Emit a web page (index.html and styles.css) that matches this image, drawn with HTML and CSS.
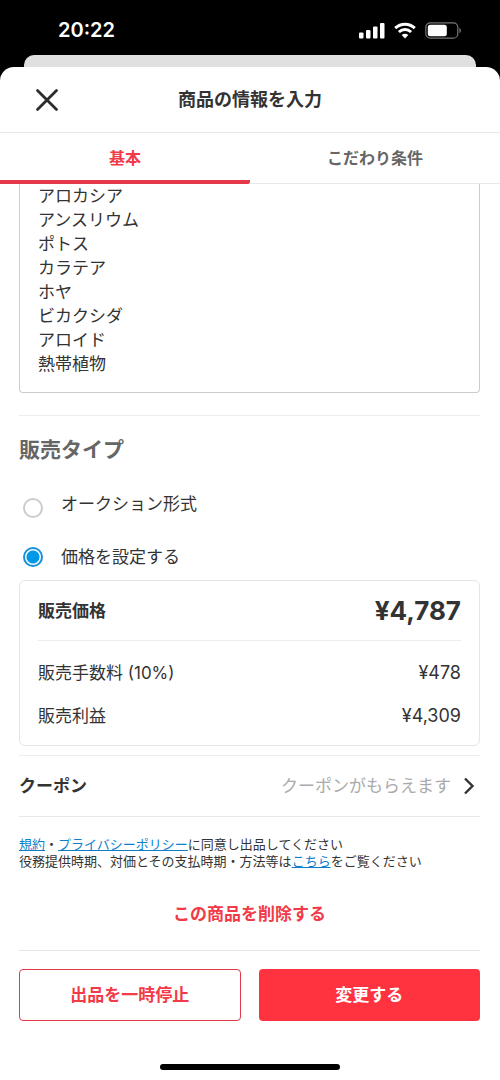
FILE: index.html
```html
<!DOCTYPE html>
<html lang="ja">
<head>
<meta charset="utf-8">
<meta name="viewport" content="width=device-width, initial-scale=1">
<title>商品の情報を入力</title>
<link rel="stylesheet" href="styles.css">
</head>
<body>
<div class="status">
  <span class="clock">20:22</span>
  <span class="status-icons">
    <svg width="26" height="17" viewBox="0 0 26 17" fill="#fff"><rect x="0" y="10.500" width="4.500" height="6" rx="1"/><rect x="7" y="8" width="4.500" height="8.500" rx="1"/><rect x="14" y="4.500" width="4.500" height="12" rx="1"/><rect x="21" y="1" width="4.500" height="15.500" rx="1"/></svg>
    <svg width="22" height="17" viewBox="0 0 22 17" fill="none" stroke="#fff" stroke-width="3"><path d="M1.200 6.200C6.800 .9 15.200 .9 20.800 6.200"/><path d="M4.900 10C8.500 6.700 13.500 6.700 17.100 10"/><path d="M11 16.500L7.700 13.100C9.600 11.400 12.400 11.400 14.300 13.100Z" fill="#fff" stroke="none"/></svg>
    <svg width="37" height="17" viewBox="0 0 37 17"><rect x=".8" y=".8" width="32" height="15.400" rx="4.500" fill="none" stroke="#777" stroke-width="1.200"/><rect x="2.800" y="2.800" width="19" height="11.400" rx="2.500" fill="#fff"/><path d="M34.400 6v5c2-.6 2-4.400 0-5Z" fill="#777"/></svg>
  </span>
</div>
<div class="back-sheet"></div>
<main class="sheet">
  <header class="header">
    <button class="close" type="button" aria-label="閉じる"><svg width="24" height="24" viewBox="0 0 24 24" fill="none" stroke="#2c2c2c" stroke-width="2.800" stroke-linecap="round"><path d="M2.500 2.500l19 19M21.500 2.500l-19 19"/></svg></button>
    <h1 class="title">商品の情報を入力</h1>
  </header>
  <nav class="tabs">
    <button class="tab tab-active" type="button">基本</button>
    <button class="tab" type="button">こだわり条件</button>
  </nav>
  <form class="form">
    <textarea class="description" rows="8" aria-label="商品の説明">アロカシア
アンスリウム
ポトス
カラテア
ホヤ
ビカクシダ
アロイド
熱帯植物</textarea>
    <section class="sale">
      <h2 class="section-title">販売タイプ</h2>
      <label class="option option-first"><input class="radio" type="radio" name="type"><span class="option-text">オークション形式</span></label>
      <label class="option"><input class="radio" type="radio" name="type" checked><span class="option-text">価格を設定する</span></label>
      <dl class="card">
        <div class="row row-price"><dt>販売価格</dt><dd class="price">¥4,787</dd></div>
        <div class="row"><dt>販売手数料 (10%)</dt><dd class="amount">¥478</dd></div>
        <div class="row"><dt>販売利益</dt><dd class="amount">¥4,309</dd></div>
      </dl>
    </section>
    <button class="coupon" type="button">
      <span class="coupon-name">クーポン</span>
      <span class="coupon-hint">クーポンがもらえます</span>
      <svg width="12" height="18" viewBox="0 0 12 18" fill="none" stroke="#333" stroke-width="2.400"><path d="M2 1.500L9.500 9L2 16.500"/></svg>
    </button>
    <p class="terms"><a href="#">規約</a>・<a href="#">プライバシーポリシー</a>に同意し出品してください<br>役務提供時期、対価とその支払時期・方法等は<a href="#">こちら</a>をご覧ください</p>
    <button class="delete" type="button">この商品を削除する</button>
    <div class="actions">
      <button class="button button-outline" type="button">出品を一時停止</button>
      <button class="button button-solid" type="submit">変更する</button>
    </div>
  </form>
  <div class="home-bar"></div>
</main>
</body>
</html>
```

FILE: styles.css
```css
* { box-sizing: border-box; }

body {
  margin: 0;
  background: #000;
  color: #333;
  font: 17px/24px Inter, "Noto Sans CJK JP", sans-serif;
}

h1, h2, p, dl, dd { margin: 0; }

button {
  padding: 0;
  border: 0;
  background: none;
  color: inherit;
  font: inherit;
  cursor: pointer;
}

svg { display: block; }

.status {
  display: flex;
  align-items: center;
  justify-content: space-between;
  height: 55px;
  padding: 5px 38px 0 58px;
  color: #fff;
}

.clock { font-size: 20px; font-weight: 600; }

.status-icons { display: flex; gap: 9px; }

.back-sheet {
  height: 12px;
  margin: 0 24px;
  border-radius: 10px 10px 0 0;
  background: #e0e0e0;
}

.sheet {
  padding-bottom: 10px;
  border-radius: 14px 14px 0 0;
  background: #fff;
}

.header {
  display: grid;
  grid-template-columns: 48px 1fr 48px;
  align-items: center;
  height: 66px;
  padding: 0 23px;
  border-bottom: 1px solid #e8e8e8;
}

.close {
  display: grid;
  place-items: center;
  height: 48px;
}

.title {
  font-size: 18px;
  font-weight: 700;
  text-align: center;
}

.tabs { display: flex; height: 51px; }

.tab {
  flex: 1;
  border-bottom: 1px solid #e8e8e8;
  color: #666;
  font-size: 16px;
  font-weight: 700;
}

.tab-active {
  padding-top: 2px;
  border-bottom: 4px solid #e5394a;
  border-radius: 0 2px 2px 0;
  color: #f23a48;
}

.form { padding: 0 20px 0 19px; }

.description {
  display: block;
  width: 100%;
  padding: 0 18px 16px;
  overflow: hidden;
  border: 1px solid #ccc;
  border-top: 0;
  border-radius: 0 0 4px 4px;
  background: #fff;
  color: #333;
  font: inherit;
  resize: none;
}

.sale {
  margin-top: 22px;
  padding: 21px 0 9px;
  border-top: 1px solid #ececec;
  border-bottom: 1px solid #ececec;
}

.section-title {
  margin-bottom: 29px;
  color: #666;
  font-size: 21px;
  font-weight: 700;
  line-height: 26px;
}

.option {
  display: flex;
  align-items: center;
  gap: 18px;
  padding-left: 4px;
  margin-bottom: 11px;
}

.option-first {
  align-items: end;
  height: 26px;
  margin-bottom: 27px;
}

.option-first .option-text { align-self: start; }

.radio {
  width: 20px;
  height: 20px;
  margin: 0;
  border: 2px solid #ccc;
  border-radius: 50%;
  background: #fff;
  appearance: none;
}

.radio:checked {
  border-color: #1691dc;
  background: radial-gradient(circle, #0099e8 6px, #fff 7px);
}

.card {
  padding: 0 18px 8px;
  border: 1px solid #e4e4e4;
  border-radius: 6px;
}

.row {
  display: flex;
  align-items: center;
  justify-content: space-between;
  height: 43px;
}

.row-price {
  height: 60px;
  margin-bottom: 10px;
  border-bottom: 1px solid #ececec;
  font-weight: 700;
}

.amount { font-size: 18px; }

.price { font-size: 26px; }

.coupon {
  display: flex;
  align-items: center;
  width: 100%;
  height: 61px;
  padding-right: 5px;
  border-bottom: 1px solid #e8e8e8;
}

.coupon-name { font-weight: 700; }

.coupon-hint {
  margin: 0 12px 0 auto;
  color: #aaa;
}

.terms {
  padding: 19px 0 32px;
  font-size: 13px;
  line-height: 17px;
}

.terms a { color: #0b7fcc; }

.delete {
  display: block;
  margin: 0 auto 24px;
  color: #f23a48;
  font-weight: 700;
}

.actions {
  display: grid;
  grid-template-columns: 1fr 1fr;
  gap: 18px;
  padding: 18px 0 43px;
  border-top: 1px solid #e4e4e4;
}

.button {
  height: 52px;
  border-radius: 4px;
  font-weight: 700;
}

.button-outline {
  border: 1px solid #e5394a;
  color: #f23a48;
}

.button-solid {
  background: #ff333f;
  color: #fff;
}

.home-bar {
  width: 36%;
  height: 6px;
  margin: 0 auto;
  border-radius: 3px;
  background: #000;
}

html { background: #fff; }
```
